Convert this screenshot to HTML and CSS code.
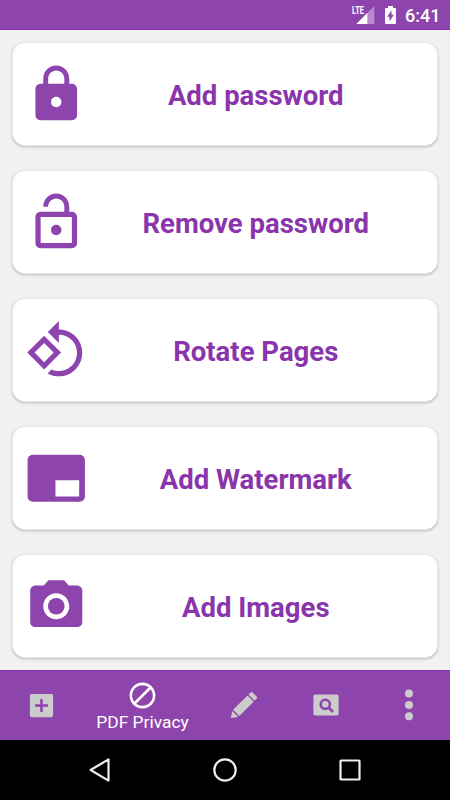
FILE: index.html
```html
<!DOCTYPE html>
<html lang="en">
<head>
<meta charset="utf-8">
<title>PDF Privacy</title>
<link rel="stylesheet" href="styles.css">
</head>
<body>
<header class="status">
  <svg class="signal" width="24" height="22" viewBox="0 0 24 22">
    <text class="lte" x="0" y="9.6" textLength="12" lengthAdjust="spacingAndGlyphs">LTE</text>
    <path d="M22.3 2v18H4.3z" fill="#b98bce"/>
    <path d="M15.3 9v11h-11z" fill="#fff"/>
  </svg>
  <svg class="battery" width="13" height="20" viewBox="0 0 13 20">
    <path d="M4 1h5v2h2q1 0 1 1v14q0 1-1 1H2q-1 0-1-1V4q0-1 1-1h2z" fill="#fff"/>
    <path d="M7.5 5.2v4.6h2.3l-4.3 6.8v-4.8H3.2z" fill="#8e44ad"/>
  </svg>
  <span class="clock">6:41</span>
</header>
<main class="list">
  <section class="card">
    <svg class="icon" viewBox="0 0 24 24"><path d="M18 8h-1V6c0-2.76-2.24-5-5-5S7 3.24 7 6v2H6c-1.1 0-2 .9-2 2v10c0 1.1.9 2 2 2h12c1.1 0 2-.9 2-2V10c0-1.1-.9-2-2-2zm-6 9c-1.1 0-2-.9-2-2s.9-2 2-2 2 .9 2 2-.9 2-2 2zm3.1-9H8.9V6c0-1.71 1.39-3.1 3.1-3.1s3.1 1.39 3.1 3.1z"/></svg>
    <h2>Add password</h2>
  </section>
  <section class="card">
    <svg class="icon" viewBox="0 0 24 24"><path d="M12 17c1.1 0 2-.9 2-2s-.9-2-2-2-2 .9-2 2 .9 2 2 2zm6-9h-1V6c0-2.76-2.24-5-5-5S7 3.24 7 6h1.9c0-1.71 1.39-3.1 3.1-3.1s3.1 1.39 3.1 3.1v2H6c-1.1 0-2 .9-2 2v10c0 1.1.9 2 2 2h12c1.1 0 2-.9 2-2V10c0-1.1-.9-2-2-2zm0 12H6V10h12z"/></svg>
    <h2>Remove password</h2>
  </section>
  <section class="card">
    <svg class="icon" viewBox="0 0 24 24"><path d="M7.34 6.41L.86 12.9l6.49 6.48 6.49-6.48-6.5-6.49zM3.69 12.9l3.66-3.66L11 12.9l-3.66 3.66-3.65-3.66zm15.67-6.26C17.61 4.88 15.3 4 13 4V.76L8.76 5 13 9.24V6c1.79 0 3.58.68 4.95 2.05 2.73 2.73 2.73 7.17 0 9.9C16.58 19.32 14.79 20 13 20c-.97 0-1.94-.21-2.84-.61l-1.49 1.49C10.02 21.62 11.51 22 13 22c2.3 0 4.61-.88 6.36-2.64 3.52-3.51 3.52-9.21 0-12.72z"/></svg>
    <h2>Rotate Pages</h2>
  </section>
  <section class="card">
    <svg class="icon" viewBox="0 0 24 24"><path d="M21 3H3c-1.1 0-2 .9-2 2v14c0 1.1.9 2 2 2h18c1.1 0 2-.9 2-2V5c0-1.1-.9-2-2-2zm-.2 16h-9.1v-6.2h9.1z"/></svg>
    <h2>Add Watermark</h2>
  </section>
  <section class="card">
    <svg class="icon" viewBox="0 0 24 24"><circle cx="12" cy="12" r="3.2"/><path d="M9 2L7.17 4H4c-1.1 0-2 .9-2 2v12c0 1.1.9 2 2 2h16c1.1 0 2-.9 2-2V6c0-1.1-.9-2-2-2h-3.17L15 2zm3 15c-2.76 0-5-2.24-5-5s2.24-5 5-5 5 2.24 5 5-2.24 5-5 5z"/></svg>
    <h2>Add Images</h2>
  </section>
</main>
<nav class="tabs">
  <div class="tab">
    <svg width="31" height="31" viewBox="0 0 24 24"><path d="M19.6 3H4.4Q3 3 3 4.4v15.2Q3 21 4.4 21h15.2q1.4 0 1.4-1.4V4.4Q21 3 19.6 3zM17 13h-4v4h-2v-4H7v-2h4V7h2v4h4z"/></svg>
  </div>
  <div class="tab active">
    <svg width="31" height="31" viewBox="0 0 24 24"><path d="M12 2C6.48 2 2 6.48 2 12s4.48 10 10 10 10-4.48 10-10S17.52 2 12 2zM4 12c0-4.42 3.58-8 8-8 1.85 0 3.55.63 4.9 1.69L5.69 16.9C4.63 15.55 4 13.85 4 12zm8 8c-1.85 0-3.55-.63-4.9-1.69L18.31 7.1C19.37 8.45 20 10.15 20 12c0 4.42-3.58 8-8 8z"/></svg>
    <span>PDF Privacy</span>
  </div>
  <div class="tab">
    <svg width="28" height="28" viewBox="0 0 28 28"><path d="M.8 27.1 2.3 20l6.1 6.1zM3.1 18.8 17.6 4.6l6.1 6.1L9.2 25.1zM18.5 3.6l2.2-2.2q.9-.8 1.8 0l4.3 4.3q.8.9 0 1.8l-2.2 2.2z"/></svg>
  </div>
  <div class="tab">
    <svg width="26" height="22" viewBox="0 0 26 22"><path d="M2 .6h22q1.6 0 1.6 1.6v17.6q0 1.6-1.6 1.6H2Q.4 21.4.4 19.8V2.2Q.4.6 2 .6z"/><circle cx="12.3" cy="10.3" r="4.6" class="lens"/><path d="m15.5 13.5 4.5 4.5" class="lens"/></svg>
  </div>
  <div class="tab">
    <svg width="10" height="32" viewBox="0 0 10 32"><circle cx="5" cy="4.6" r="4"/><circle cx="5" cy="16" r="4"/><circle cx="5" cy="27.3" r="4"/></svg>
  </div>
</nav>
<footer class="system">
  <svg width="26" height="26" viewBox="0 0 26 26"><path d="M21.5 2.4v21.2L3.6 13z"/></svg>
  <svg width="26" height="26" viewBox="0 0 26 26"><circle cx="13" cy="13" r="10.7"/></svg>
  <svg width="26" height="26" viewBox="0 0 26 26"><rect x="3.5" y="3.5" width="19" height="19" rx=".5"/></svg>
</footer>
</body>
</html>
```
FILE: styles.css
```css
* { box-sizing: border-box; }
body {
  margin: 0;
  width: 450px;
  height: 800px;
  overflow: hidden;
  display: flex;
  flex-direction: column;
  background: #f1f1f1;
  font-family: Roboto, sans-serif;
}
.status {
  height: 30px;
  flex: none;
  display: flex;
  align-items: center;
  justify-content: flex-end;
  padding-right: 10px;
  background: #8e44ad;
  border-bottom: 1px solid #8430a6;
  color: #fff;
}
.signal { margin: 1px 8px 0 0; }
.lte { font-size: 10px; font-weight: 700; fill: #fff; }
.battery { margin: 1px 8px 0 0; }
.clock { font-size: 18px; font-weight: 500; line-height: 30px; padding-top: 2px; width: 35px; text-align: right; }
.list {
  height: 640px;
  flex: none;
  padding: 12px;
  display: flex;
  flex-direction: column;
  gap: 24px;
}
.card {
  height: 104px;
  flex: none;
  display: flex;
  align-items: center;
  padding: 0 13px;
  background: #fff;
  border: .5px solid #ececec;
  border-radius: 13px;
  box-shadow: 0 1px 2.5px rgba(0, 0, 0, .24);
}
.icon { width: 62.5px; height: 62.5px; flex: none; margin-left: -1px; fill: #8e44ad; }
.card h2 {
  flex: 1;
  margin: 3px 0 0;
  text-align: center;
  font-size: 27.5px;
  line-height: 32px;
  font-weight: 700;
  color: #8a35ab;
  white-space: nowrap;
}
.tabs {
  height: 70px;
  flex: none;
  display: grid;
  grid-template-columns: 82px 121px 82px 82px 83px;
  background: #8e44ad;
  border-top: 1px solid #8430a6;
  fill: #ccc;
}
.tab { display: flex; align-items: center; justify-content: center; padding-bottom: 1px; }
.active {
  flex-direction: column;
  justify-content: flex-start;
  padding-top: 8.5px;
  fill: #fff;
  color: #fff;
}
.active span { margin-top: 1px; font-size: 17.4px; line-height: 21px; white-space: nowrap; }
.lens { fill: none; stroke: #8e44ad; stroke-width: 2.6; }
.system {
  height: 60px;
  flex: none;
  display: flex;
  align-items: center;
  justify-content: center;
  gap: 99px;
  background: #000;
}
.system svg { fill: none; stroke: #eee; stroke-width: 2.2; stroke-linejoin: round; }
```
